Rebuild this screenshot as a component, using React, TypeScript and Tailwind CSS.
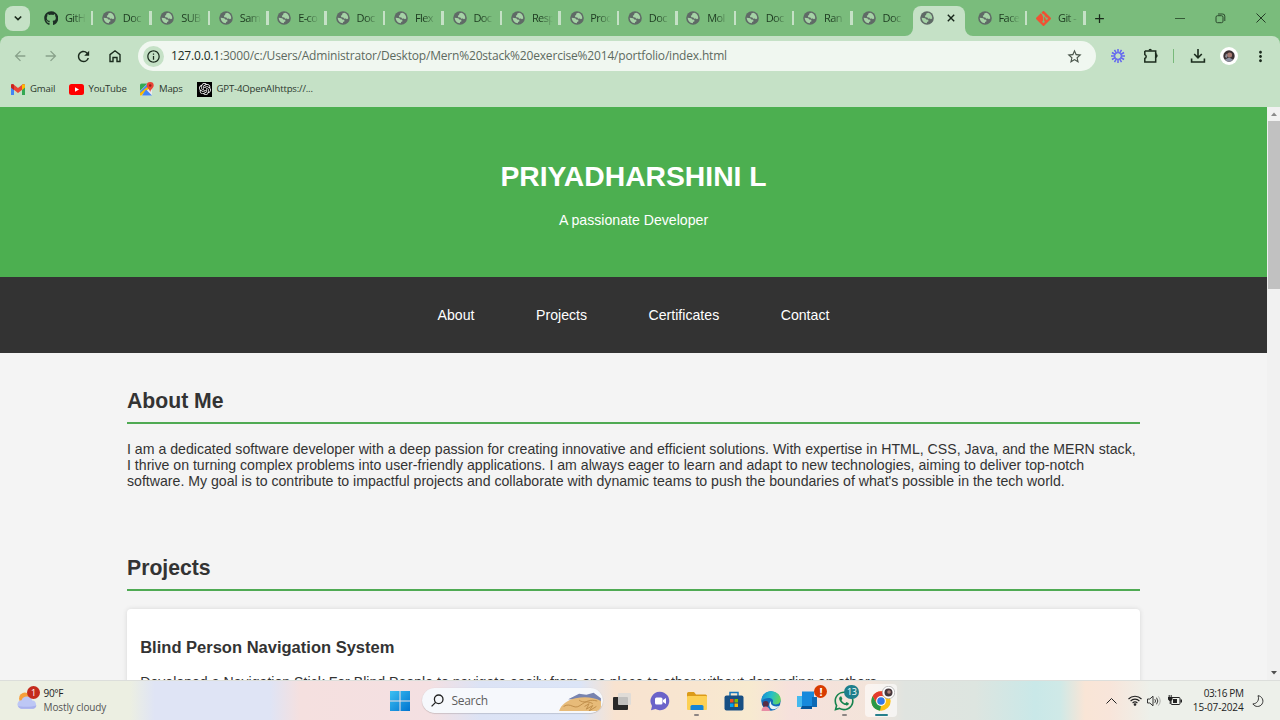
import React from 'react';
import { FaGithub, FaWhatsapp } from 'react-icons/fa';
import { SiGit, SiOpenai } from 'react-icons/si';
import {
  MdArrowBack, MdArrowForward, MdRefresh, MdInfoOutline, MdStarBorder, MdAdd, MdMoreVert,
} from 'react-icons/md';

const tabs = ['GitH', 'Doc', 'SUB', 'Sam', 'E-co', 'Doc', 'Flex', 'Doc', 'Resp', 'Proc', 'Doc', 'Mol', 'Doc', 'Ran', 'Doc'];

function Globe() {
  return (
    <svg viewBox="0 0 14 14" className="size-[14px] shrink-0">
      <circle cx="7" cy="7" r="6.8" fill="#5f6a66" />
      <path d="M8.200 1.700 6.300 2.600 6.100 4l-1.300.8.5 1.500 2 .1.900 1.300 1.600-.3 1.100.8 1.300-.6c.4-2.800-1.300-5.200-4-5.900Z" fill="#a5d2a6" />
      <path d="M1.700 6.800c.1 3 2.200 5.300 5.100 5.500l.3-1.400 1.400-.7-.3-1.500-1.900-.2-1-1.300-3.600-.4Z" fill="#a5d2a6" />
    </svg>
  );
}

function Tab({ label, icon, last }: { label: string; icon?: React.ReactNode; last?: boolean }) {
  return (
    <div className="relative flex h-[24px] w-[58.450px] shrink-0 items-center pl-[9.800px]">
      {icon ?? <Globe />}
      <span className="ml-[6.800px] w-[21px] whitespace-nowrap mask-r-from-40% text-[11px] tracking-[-0.600px] text-[#1d3a20]">{label}</span>
      {!last && <span className="absolute right-[-1px] h-[14px] w-[2.500px] bg-[#c5e1c6]" />}
    </div>
  );
}

function TabStrip() {
  return (
    <div className="flex h-[36px] w-full items-center bg-[#7abc7c]">
      <button className="ml-[5px] mr-[3.800px] flex size-[25px] items-center justify-center rounded-[8px] bg-[#c5e1c6]">
        <svg viewBox="0 0 10 10" className="size-[10px]" fill="none" stroke="#1c2b1d" strokeWidth="1.700"><path d="m1.800 3.500 3.200 3 3.200-3" /></svg>
      </button>
      {tabs.map((t, i) => (
        <Tab key={i} label={t} last={i === 14} icon={i === 0 ? <FaGithub className="size-[14.500px] shrink-0 text-[#1d2f25]" /> : undefined} />
      ))}
      <div className="relative mr-[2.500px] ml-[2.500px] flex h-[30px] w-[52.600px] shrink-0 items-center self-end rounded-t-[8px] bg-[#c5e1c6] pb-[6px] pl-[7px]">
        <svg viewBox="0 0 8 8" className="absolute -left-[8px] bottom-0 size-[8px]"><path d="M8 0v8H0a8 8 0 0 0 8-8Z" fill="#c5e1c6" /></svg>
        <svg viewBox="0 0 8 8" className="absolute -right-[8px] bottom-0 size-[8px]"><path d="M0 0v8h8a8 8 0 0 1-8-8Z" fill="#c5e1c6" /></svg>
        <Globe />
        <svg viewBox="0 0 8 8" className="ml-[13.500px] size-[8px]" stroke="#17251a" strokeWidth="1.400"><path d="m.8.8 6.400 6.400M7.200.8.8 7.200" /></svg>
      </div>
      <Tab label="Face" />
      <Tab label="Git -" icon={<SiGit className="size-[15px] shrink-0 text-[#f05133]" />} />
      <MdAdd className="ml-[7px] size-[15px] text-[#1a2a1b]" />
      <div className="ml-auto flex items-center gap-[30px] pr-[14px]">
        <span className="h-px w-[10px] bg-[#355a37]" />
        <svg viewBox="0 0 11 11" className="size-[11px]" fill="none" stroke="#2b482d"><rect x="1" y="2.700" width="7" height="7" rx="1.500" /><path d="M3 1h4.500A2.200 2.200 0 0 1 9.800 3.200V8" /></svg>
        <svg viewBox="0 0 10 10" className="size-[10px]" stroke="#243b26"><path d="m.5.5 9 9M9.500.5l-9 9" /></svg>
      </div>
    </div>
  );
}

function Toolbar() {
  return (
    <div className="bg-[#7abc7c]">
      <div className="flex h-[40px] items-center rounded-t-[8px] bg-[#c5e1c6]">
        <MdArrowBack className="ml-[12px] size-[16px] text-[#88a18a]" />
        <MdArrowForward className="ml-[15px] size-[16px] text-[#88a18a]" />
        <MdRefresh className="ml-[15.500px] size-[17px] text-[#1b2b1d]" />
        <svg viewBox="0 0 14 14" className="ml-[16.500px] size-[14px]" fill="none" stroke="#1b2b1d" strokeWidth="1.400"><path d="M2 5.600 7 1.800l5 3.800v6.900H9V8.500H5v4H2Z" /></svg>
        <div className="ml-[16px] flex h-[30px] w-[957.500px] items-center rounded-full bg-[#f0f7f0]">
          <span className="ml-[5px] flex size-[21px] items-center justify-center rounded-full bg-[#c5e1c6]">
            <MdInfoOutline className="size-[15px] text-[#1b2b1d]" />
          </span>
          <span className="ml-[7px] whitespace-nowrap text-[12px] tracking-[-0.185px] text-[#5d6a5f]"><span className="text-[#222d24]">127.0.0.1</span>:3000/c:/Users/Administrator/Desktop/Mern%20stack%20exercise%2014/portfolio/index.html</span>
          <MdStarBorder className="mr-[13px] ml-auto size-[17px] text-[#4a554b]" />
        </div>
        <svg viewBox="0 0 16 16" className="ml-[14.500px] size-[16px]" stroke="#6366f1" strokeWidth="1.500"><path d="M11 8h4M10.600 9.500l3.460 2M9.500 10.600l2 3.460M8 11v4M6.500 10.600l-2 3.460M5.400 9.500l-3.460 2M5 8H1M5.400 6.500l-3.460-2M6.500 5.400l-2-3.460M8 5V1M9.500 5.400l2-3.460M10.600 6.500l3.460-2" /><circle cx="8" cy="8" r="3.300" fill="none" strokeWidth="1" /></svg>
        <svg viewBox="0 0 16 16" className="ml-[16.500px] size-[16px]" fill="none" stroke="#1b2b1d" strokeWidth="1.500"><path d="M1.800 3h10.900v3.100M12.700 9v5H1.800v-3.600a2 2 0 0 0 0-3.800V3" /><path d="M5.500 2.500a1.700 1.700 0 0 1 3.400 0ZM13 6.100a1.700 1.700 0 0 1 0 3.400Z" fill="#1b2b1d" stroke="none" /><path d="M12.700 5v5" /></svg>
        <span className="ml-[14px] h-[14px] w-[1.500px] bg-[#78b97a]" />
        <svg viewBox="0 0 16 16" className="ml-[15.500px] size-[16px]" fill="none" stroke="#1b2b1d" strokeWidth="1.600"><path d="M8 1v8.500M4.200 6 8 9.800 11.800 6M1.600 10.500V14h12.800v-3.500" /></svg>
        <span className="ml-[14.500px] flex size-[18px] items-center justify-center rounded-full bg-white">
          <svg viewBox="0 0 12 12" className="size-[12px]"><circle cx="6" cy="6" r="5.700" fill="#3b3033" /><circle cx="6.600" cy="5" r="2.500" fill="#a77a72" /><path d="M2 9.500 6 7.600l4 2-2 1.800H4Z" fill="#8b90a2" /><path d="M3 3.500 4.500 5 4 8 2 7Z" fill="#8e8d99" /></svg>
        </span>
        <MdMoreVert className="ml-[14px] size-[17px] text-[#1b2b1d]" />
      </div>
    </div>
  );
}

function Bookmarks() {
  return (
    <div className="flex h-[31px] items-center bg-[#c5e1c6] pb-[5px] text-[9.600px] tracking-[-0.180px] whitespace-nowrap text-[#2c382e]">
      <svg viewBox="0 0 14 11" className="ml-[11px] h-[11px] w-[14px]"><path d="M0 1.500V11h3V3Z" fill="#4285f4" /><path d="M14 1.500V11h-3V3Z" fill="#34a853" /><path d="M0 1.500C0 .2 1.600-.3 2.600.5L7 4 11.400.5C12.400-.3 14 .2 14 1.500V3.600L7 9 0 3.600Z" fill="#ea4335" /><path d="M11 .8v5.100l3-2.300V1.500C14 .2 12.400-.3 11 .8Z" fill="#fbbc04" /><path d="M3 .8v5.100L0 3.600V1.500C0 .2 1.600-.3 3 .8Z" fill="#c5221f" /></svg>
      <span className="ml-[5px] w-[25.500px]">Gmail</span>
      <svg viewBox="0 0 15 11" className="ml-[13.500px] h-[11px] w-[15px]"><rect width="15" height="11" rx="2.500" fill="#f00" /><path d="m6 3.300 4 2.200-4 2.200Z" fill="#fff" /></svg>
      <span className="ml-[4.500px] w-[38px]">YouTube</span>
      <svg viewBox="0 0 14 14" className="ml-[13.500px] size-[14px]"><rect x="0" y="1.500" width="12" height="12" rx="1.500" fill="#e8eaed" /><path d="M1.500 1.500h6L0 9V3Q0 1.500 1.500 1.500Z" fill="#34a853" /><path d="M0 9.500 7.500 2l2 2L0 13Z" fill="#4285f4" /><path d="M0 11 9 3.500l1.500 1.500L1.500 13.500H0Z" fill="#fbbc04" /><path d="m6 7.500 6 6H2Z" fill="#4285f4" /><path d="M10.200 0a3.500 3.500 0 0 0-3.500 3.600C6.700 6 9.400 7 10.200 10c.8-3 3.500-4 3.500-6.400A3.500 3.500 0 0 0 10.200 0Z" fill="#ea4335" /><circle cx="10.200" cy="3.500" r="1.200" fill="#8c2018" /></svg>
      <span className="ml-[5px] w-[23.500px]">Maps</span>
      <span className="ml-[14.500px] flex size-[15px] items-center justify-center bg-black"><SiOpenai className="size-[12px] text-white" /></span>
      <span className="ml-[4.500px]">GPT-4OpenAIhttps://...</span>
    </div>
  );
}

function Portfolio() {
  return (
    <main className="h-full w-[1267px] overflow-hidden bg-[#f4f4f4] font-['Liberation_Sans',Arial,sans-serif] text-[14.140px] leading-[16px] text-[#333]">
      <header className="flex h-[170px] flex-col items-center bg-[#4caf50] pt-[53px] text-white">
        <h1 className="text-[28.300px] leading-[32px] font-bold">PRIYADHARSHINI L</h1>
        <p className="mt-[20px]">A passionate Developer</p>
      </header>
      <nav className="flex h-[76px] items-center justify-center gap-[61.500px] bg-[#333] text-white">
        <a>About</a><a>Projects</a><a>Certificates</a><a>Contact</a>
      </nav>
      <div className="mx-auto w-[1013px] pt-[35px]">
        <section>
          <h2 className="h-[36px] border-b-2 border-[#4faa53] text-[21.200px] leading-[25px] font-bold">About Me</h2>
          <p className="mt-[17px] whitespace-nowrap">I am a dedicated software developer with a deep passion for creating innovative and efficient solutions. With expertise in HTML, CSS, Java, and the MERN stack,<br />I thrive on turning complex problems into user-friendly applications. I am always eager to learn and adapt to new technologies, aiming to deliver top-notch<br />software. My goal is to contribute to impactful projects and collaborate with dynamic teams to push the boundaries of what's possible in the tech world.</p>
        </section>
        <section className="mt-[66px]">
          <h2 className="h-[36px] border-b-2 border-[#4faa53] text-[21.200px] leading-[25px] font-bold">Projects</h2>
          <article className="mt-[18px] h-[150px] rounded-[4px] bg-white px-[13.200px] pt-[29px] shadow-[0_0_5px_rgba(0,0,0,0.12)]">
            <h3 className="text-[16.520px] leading-[20px] font-bold">Blind Person Navigation System</h3>
            <p className="mt-[16px] whitespace-nowrap">Developed a Navigation Stick For Blind People to navigate easily from one place to other without depending on others.</p>
          </article>
        </section>
      </div>
    </main>
  );
}

function Scrollbar() {
  return (
    <div className="flex flex-1 flex-col items-center bg-[#f1f1f1]">
      <svg viewBox="0 0 12 14" className="h-[14px] w-[12px]"><path d="m3 9 3-3.500L9 9Z" fill="#8a8a8a" /></svg>
      <div className="h-[168px] w-full pl-px"><div className="h-full bg-[#c1c1c1]" /></div>
      <svg viewBox="0 0 12 14" className="mt-auto h-[14px] w-[12px]"><path d="m3 5 3 3.500L9 5Z" fill="#505050" /></svg>
    </div>
  );
}

function Slot({ children, running, active }: { children: React.ReactNode; running?: boolean; active?: boolean }) {
  return (
    <div className={active ? 'relative flex h-[33px] w-[32px] items-center justify-center rounded-[4px] bg-white/60' : 'relative flex h-[33px] w-[32px] items-center justify-center'}>
      {children}
      {running && <span className="absolute bottom-px h-[2.500px] w-[5px] rounded-full bg-[#8c8583]" />}
      {active && <span className="absolute bottom-px h-[2.500px] w-[13px] rounded-full bg-[#27808c]" />}
    </div>
  );
}

function Taskbar() {
  return (
    <footer className="flex h-[40px] w-full items-center border-t border-[#dcdedb] bg-[linear-gradient(90deg,#ecefe2_0px,#ecefe2_130px,#dfe4f5_155px,#dfe4f5_270px,#f5e0df_300px,#f4e0e2_430px,#dce3f5_480px,#dce5f7_580px,#f8e3d0_615px,#f8e6d0_700px,#f7ead0_750px,#f6e1dc_790px,#f3e4da_870px,#e0e4e0_905px,#dde5e0_975px,#c9e8e8_1035px,#cfe9e7_1060px,#f9e5d6_1085px,#f8e5da_1110px,#edf0ea_1150px,#edf0ea_1280px)] text-[10px] text-[#222]">
      <div className="relative ml-[17px] flex w-[373px] items-center">
        <svg viewBox="0 0 20 17" className="h-[18px] w-[21px]"><circle cx="7.500" cy="6" r="5.500" fill="#f6a03b" /><path d="M4.500 15.800a4 4 0 0 1-.2-8A5.400 5.400 0 0 1 14.500 8a4 4 0 0 1 .8 7.800Z" fill="#bdc7f5" /><path d="M1 13c3 1.500 13 1.500 17.500-.5-.3 2-1.500 3.300-3.200 3.300H4.500C2.500 15.800 1.300 14.500 1 13Z" fill="#a9b1ed" /></svg>
        <span className="absolute left-[10px] top-[-1px] flex size-[13px] items-center justify-center rounded-full bg-[#c42b1c] text-[9px] text-white">1</span>
        <div className="ml-[5.500px] flex flex-col leading-[13.500px] tracking-[-0.100px]"><span className="tracking-[-0.300px]">90°F</span><span className="text-[#555]">Mostly cloudy</span></div>
      </div>
      <svg viewBox="0 0 20 20" className="size-[20px]"><defs><linearGradient id="win" x1="0" y1="0" x2="1" y2="1"><stop stopColor="#3cc0f2" /><stop offset="1" stopColor="#0073cf" /></linearGradient></defs><path d="M0 0h9.500v9.500H0ZM10.500 0H20v9.500h-9.500ZM0 10.500h9.500V20H0ZM10.500 10.500H20V20h-9.500Z" fill="url(#win)" /></svg>
      <div className="ml-[12px] flex h-[25px] w-[181px] items-center overflow-hidden rounded-full bg-[#f6f8fc] shadow-[0_0.500px_1px_rgba(0,0,0,0.25)]">
        <svg viewBox="0 0 13 13" className="ml-[9px] size-[13px]" fill="none" stroke="#222" strokeWidth="1.300"><circle cx="7.700" cy="5.300" r="4.300" /><path d="m4.600 8.400-4 4" /></svg>
        <span className="ml-[7.500px] text-[12px] tracking-[-0.300px] text-[#5d5d5d]">Search</span>
        <svg viewBox="0 0 46 22" className="ml-auto h-[20px] w-[46px]"><path d="M10 9 22 3l8 1 8-2 8 6v4Z" fill="#7884b0" /><path d="M0 22c2-7 9-12 18-14 11-2 20-1 28 3v11Z" fill="#e7bb79" /><path d="M5 17c8-5 11 4 18-1s11-7 19-5M22 10c5 4 9 0 15 4M28 17l5-3-3 6 7-4-4 6 8-5" fill="none" stroke="#bd8b48" /></svg>
      </div>
      <div className="ml-[4px] flex items-center gap-[4.900px]">
        <Slot><svg viewBox="0 0 20 20" className="size-[20px]"><rect x="0" y="6" width="15" height="13" rx="1" fill="#292929" /><rect x="5" y="2" width="13" height="12" rx="1" fill="#dcdad8" opacity=".85" /></svg></Slot>
        <Slot><svg viewBox="0 0 20 20" className="size-[20px]"><path d="M10 .8A9.200 9.200 0 1 1 5.500 18L1 19.200 2 15A9.200 9.200 0 0 1 10 .8Z" fill="#6b63c9" /><rect x="5" y="6.500" width="7.500" height="7" rx="1.500" fill="#fff" /><path d="m13 9 3-2v6l-3-2Z" fill="#fff" /></svg></Slot>
        <Slot running><svg viewBox="0 0 20 18" className="h-[18px] w-[20px]"><path d="M0 1.500Q0 0 1.500 0H7l2 2.500h9.500Q20 2.500 20 4v5H0Z" fill="#dc9b18" /><rect y="4" width="20" height="14" rx="1" fill="#fdd053" /><path d="M3.500 18v-3.500q0-1.500 1.500-1.500h10q1.500 0 1.500 1.500V18Z" fill="#1685d6" /></svg></Slot>
        <Slot><svg viewBox="0 0 20 20" className="size-[20px]"><path d="M6 5V1.500h8V5" fill="none" stroke="#1676bd" strokeWidth="1.500" /><rect x="0.500" y="4.500" width="19" height="15" rx="2" fill="#174f83" /><path d="M6 8h3.500v3.500H6Z" fill="#f25022" /><path d="M10.500 8H14v3.500h-3.500Z" fill="#7fba00" /><path d="M6 12.500h3.500V16H6Z" fill="#00a4ef" /><path d="M10.500 12.500H14V16h-3.500Z" fill="#ffb900" /></svg></Slot>
        <Slot><svg viewBox="0 0 20 20" className="size-[20px]"><defs><linearGradient id="edge" x1="0" y1="0.300" x2="1" y2="0.500"><stop stopColor="#168dd4" /><stop offset=".5" stopColor="#27bfc7" /><stop offset="1" stopColor="#65d65b" /></linearGradient></defs><circle cx="10" cy="10" r="9.700" fill="#126cbb" /><path d="M.4 9C1 3.500 5 .3 10 .3c5.500 0 9.700 3.700 9.700 8.300 0 3-2 4.900-5 4.900-2 0-3-.9-3-1.700.8-1.500.5-4.500-3-4.800C5 6.700 1.500 8 .4 11Z" fill="url(#edge)" /><path d="M10 10c-1 4 3 6.500 8.300 5-1.500 2.500-5 3.700-7.500 3C8 17 7.500 12 10 10Z" fill="#e9f4f5" /><circle cx="4.700" cy="13" r="3" fill="#572d45" /><path d="M.5 20c0-6 8-6 8.500 0Z" fill="#e88da5" /></svg></Slot>
        <Slot><svg viewBox="0 0 20 20" className="size-[20px]"><rect x="5" y="0.500" width="12" height="14.500" fill="#1789dc" /><path d="M0 5h5v11H0Z" fill="#46b9ee" /><path d="M15 6h5v10h-5Z" fill="#0e69b4" /><path d="M5 15h10v3H3.500Z" fill="#075499" /></svg><span className="absolute top-[1px] right-[3px] flex size-[13px] items-center justify-center rounded-full bg-[#d83b01] translate-x-[7px] text-[11px] leading-[11px] font-bold text-white">!</span></Slot>
        <Slot running><FaWhatsapp className="size-[22px] text-[#16834e]" /><span className="absolute top-[0.500px] right-[1px] flex h-[14px] w-[15px] items-center justify-center rounded-full bg-[#1e7f8c] text-[9px] leading-[9px] tracking-[-0.300px] text-white">13</span></Slot>
        <Slot active><svg viewBox="0 0 20 20" className="size-[20px]"><circle cx="10" cy="10" r="9.700" fill="#fbc116" /><path d="M1.600 5.150A9.700 9.700 0 0 1 18.400 5.150H10L6 12.500Z" fill="#e33b2e" /><path d="M1.600 5.150 5.800 12.400 10 14.850l-1 4.800A9.700 9.700 0 0 1 1.600 5.150Z" fill="#279847" /><circle cx="10" cy="10" r="4.900" fill="#fff" /><circle cx="10" cy="10" r="3.800" fill="#3379e8" /></svg><svg viewBox="0 0 13 13" className="absolute top-[2px] right-[2.500px] size-[13px]"><circle cx="6.500" cy="6.500" r="6.200" fill="#fff" stroke="#999" strokeWidth=".6" /><circle cx="6.500" cy="6.500" r="4" fill="#45373b" /><circle cx="7" cy="6" r="1.800" fill="#ac8179" /></svg></Slot>
      </div>
      <div className="ml-auto flex items-center pr-[16.500px] text-[#222]">
        <svg viewBox="0 0 11 6" className="h-[6px] w-[11px]" fill="none" stroke="currentColor"><path d="m.5 5.500 5-5 5 5" /></svg>
        <svg viewBox="0 0 14 11" className="ml-[11px] h-[11px] w-[14px]" fill="none" stroke="currentColor" strokeWidth="1.100"><path d="M.5 4a9 9 0 0 1 13 0M2.600 6a6.100 6.100 0 0 1 8.800 0M4.600 8a3.400 3.400 0 0 1 4.800 0" /><circle cx="7" cy="9.500" r=".8" fill="currentColor" /></svg>
        <svg viewBox="0 0 14 12" className="ml-[5px] h-[12px] w-[14px]" fill="none" stroke="currentColor" strokeWidth=".9"><path d="M.5 4h2.300L6 1.200v9.600L2.800 8H.5ZM7.800 4.200q1.500 1.800 0 3.600M9.500 2.700q2.700 3.300 0 6.600" /><path d="M11.300 1.300q3.800 4.700 0 9.400" opacity=".35" /></svg>
        <svg viewBox="0 0 14 11" className="ml-[7px] h-[11px] w-[14px]" fill="none" stroke="currentColor"><rect x="3" y="2.500" width="9" height="7" rx="1" /><path d="M5 4h4v4H5ZM12.500 4.500H14v3h-1.500ZM0 2h4.500v2.500L3 6H1.500L0 4.500Z" fill="currentColor" stroke="none" /><path d="M1.200 0v2M3.200 0v2M2.200 5v4" /></svg>
        <div className="ml-[10px] w-[52px] text-right leading-[13.300px] whitespace-nowrap"><div className="tracking-[-0.420px]">03:16 PM</div><div className="tracking-[-0.150px]">15-07-2024</div></div>
        <svg viewBox="0 0 12 12" className="ml-[8px] size-[12px]" fill="none" stroke="currentColor" strokeWidth=".9"><path d="M6 .7a5.400 5.400 0 1 1-5.100 8.200C4.500 9 7.800 5.200 6 .7Z" /></svg>
      </div>
    </footer>
  );
}

export default function App() {
  return (
    <div className="flex h-[720px] w-[1280px] flex-col overflow-hidden font-['Open_Sans','Noto_Sans',sans-serif]">
      <TabStrip />
      <Toolbar />
      <Bookmarks />
      <div className="flex h-[573px] min-h-0 shrink-0">
        <Portfolio />
        <Scrollbar />
      </div>
      <Taskbar />
    </div>
  );
}
